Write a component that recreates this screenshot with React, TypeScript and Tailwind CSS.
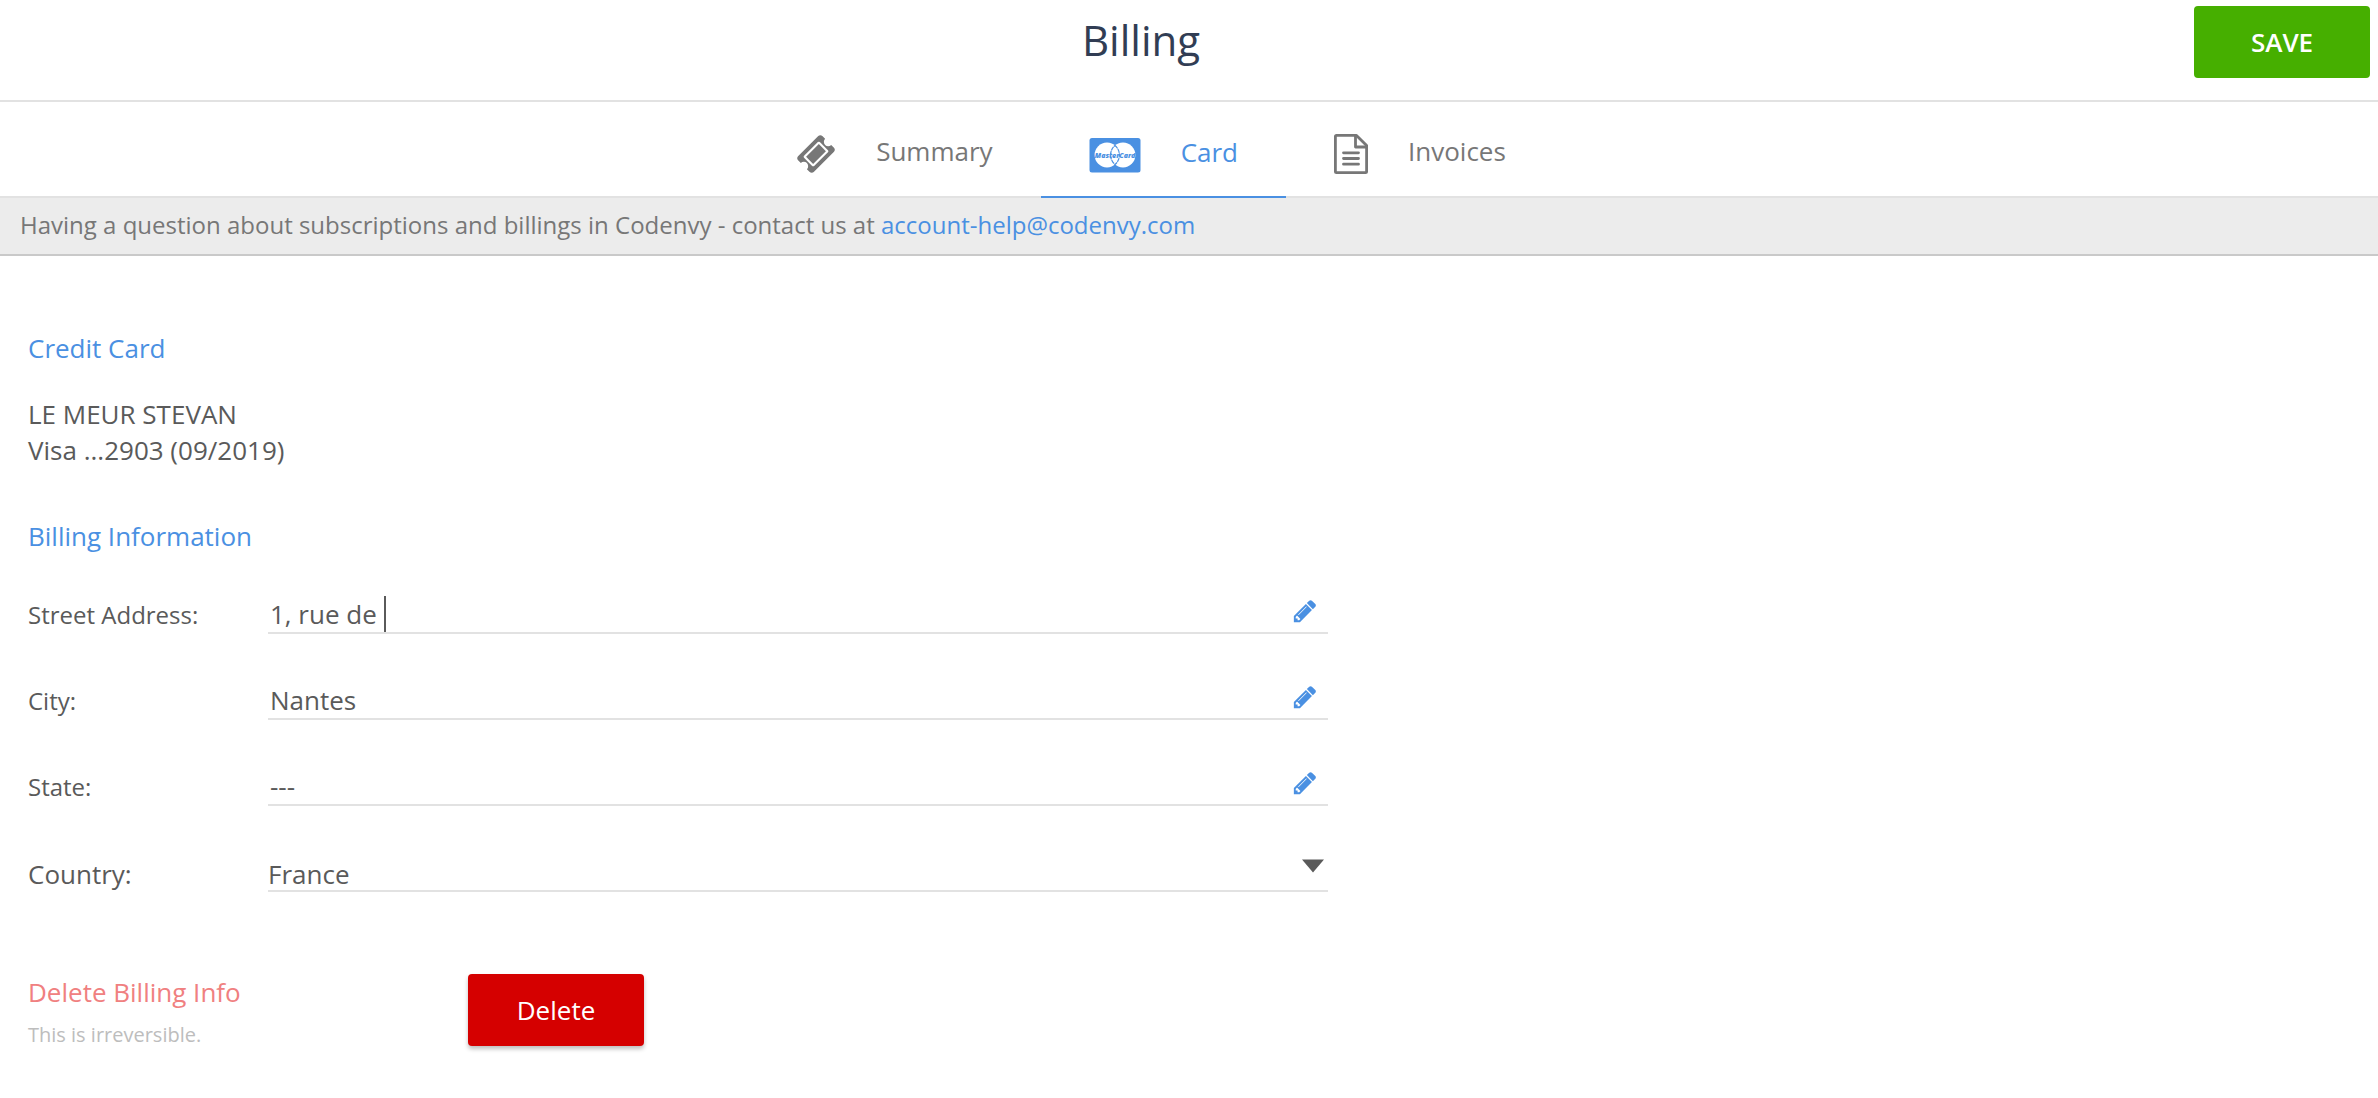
import { useEffect, useRef, useState } from 'react';
import type { ReactNode } from 'react';

function TicketIcon() {
  return (
    <svg className="size-10" viewBox="0 0 1792 1792" fill="currentColor" aria-hidden="true">
      <path d="M1024 452l316 316-572 572-316-316zm-211 979l618-618q19-19 19-45t-19-45l-362-362q-18-18-45-18t-45 18l-618 618q-19 19-19 45t19 45l362 362q18 18 45 18t45-18zm889-637l-907 908q-37 37-90.500 37t-90.500-37l-126-126q56-56 56-136t-56-136-136-56-136 56l-125-126q-37-37-37-90.500t37-90.500l907-906q37-37 90.500-37t90.500 37l125 125q-56 56-56 136t56 136 136 56 136-56l126 125q37 37 37 90.500t-37 90.500z" />
    </svg>
  );
}

function MasterCardIcon() {
  return (
    <svg className="h-9 w-13" viewBox="0 0 52 36" aria-hidden="true">
      <rect x="0.500" y="1" width="51" height="34.500" rx="2.500" fill="#4a90e2" />
      <circle cx="18" cy="18" r="12.400" fill="#fff" />
      <circle cx="34" cy="18" r="12.400" fill="#fff" />
      <path
        d="M26 8.500A12.400 12.400 0 0 1 26 27.500A12.400 12.400 0 0 1 26 8.500Z"
        fill="none"
        stroke="#4a90e2"
        strokeWidth="1.200"
        strokeDasharray="4 0.600"
      />
      <text
        x="26"
        y="20.500"
        textAnchor="middle"
        fontSize="7"
        fontWeight="800"
        fontStyle="italic"
        fill="#4a90e2"
      >
        MasterCard
      </text>
    </svg>
  );
}

function InvoiceIcon() {
  return (
    <svg className="h-10 w-[34px]" viewBox="0 0 34 40" fill="none" stroke="currentColor" strokeWidth="2.800" aria-hidden="true">
      <path d="M2.500 1.400H22.500L32.600 11.500V37.500Q32.600 38.600 31.500 38.600H2.500Q1.400 38.600 1.400 37.500V2.500Q1.400 1.400 2.500 1.400Z" strokeLinejoin="round" />
      <path d="M21.500 1.400V13H32.600" strokeLinejoin="round" />
      <path d="M9.500 18.800H24.500M9.500 24.500H24.500M9.500 30.200H24.500" strokeLinecap="round" />
    </svg>
  );
}

function PencilIcon() {
  return (
    <svg className="size-[26px]" viewBox="0 0 1792 1792" fill="currentColor" aria-hidden="true">
      <path d="M491 1536l91-91-235-235-91 91v107h128v128h107zm523-928q0-22-22-22-10 0-17 7l-542 542q-7 7-7 17 0 22 22 22 10 0 17-7l542-542q7-7 7-17zm-54-192l416 416-832 832h-416v-416zm683 96q0 53-37 90l-166 166-416-416 166-165q36-38 90-38 53 0 91 38l235 234q37 39 37 91z" />
    </svg>
  );
}

function Tab({ label, icon, active = false }: { label: string; icon: ReactNode; active?: boolean }) {
  return (
    <button
      type="button"
      role="tab"
      aria-selected={active}
      className={
        active
          ? 'flex h-24 items-center gap-10 border-b-2 border-[#4a90e2] px-12 pt-3 text-[#4a90e2]'
          : 'flex h-24 items-center gap-10 border-b-2 border-[#e2e2e2] px-12 pt-2.5 text-[#777777]'
      }
    >
      {icon}
      <span className="pb-1.5">{label}</span>
    </button>
  );
}

function Field({ id, label, value, focused = false }: { id: string; label: string; value: string; focused?: boolean }) {
  const [text, setText] = useState(value);
  const ref = useRef<HTMLInputElement>(null);
  useEffect(() => {
    if (focused && ref.current) {
      ref.current.focus();
      ref.current.setSelectionRange(value.length, value.length);
    }
  }, [focused, value]);
  return (
    <div className="flex h-18 items-end">
      <label htmlFor={id} className="w-60 shrink-0 pb-px text-2xl leading-9">
        {label}
      </label>
      <div className="flex flex-1 items-center border-b-2 border-[#e2e2e2] pr-2.5">
        <div className="flex flex-1 items-center">
          <input
            id={id}
            ref={ref}
            value={text}
            onChange={(e) => setText(e.target.value)}
            className="field-sizing-content h-9 min-w-0 bg-transparent pl-0.5 caret-transparent outline-none"
          />
          {focused && <span className="h-9 w-0.5 bg-[#5a5a5a]" />}
        </div>
        <button type="button" aria-label={'Edit ' + label} className="pb-1.5 text-[#4a90e2]">
          <PencilIcon />
        </button>
      </div>
    </div>
  );
}

export default function App() {
  return (
    <div className="min-h-screen bg-white font-['Open_Sans',sans-serif] text-[26px] leading-9 text-[#5a5a5a]">
      <header className="flex items-start border-b-2 border-[#e2e2e2] pt-1.5 pr-2 pb-[22px] pl-[88px]">
        <h1 className="flex-1 pt-1.5 text-center text-[42px] leading-[56px] text-[#313d54]">Billing</h1>
        <button type="button" className="h-18 w-44 rounded-sm bg-[#46af00] font-semibold text-white">
          SAVE
        </button>
      </header>

      <nav role="tablist" className="flex">
        <div className="flex-1 border-b-2 border-[#e2e2e2]" />
        <Tab label="Summary" icon={<TicketIcon />} />
        <Tab label="Card" icon={<MasterCardIcon />} active />
        <Tab label="Invoices" icon={<InvoiceIcon />} />
        <div className="flex-1 border-b-2 border-[#e2e2e2] pr-[76px]" />
      </nav>

      <p className="border-b-2 border-[#c9c9c9] bg-[#ececec] px-5 pt-[9px] pb-[11px] text-2xl leading-9 text-[#777777]">
        Having a question about subscriptions and billings in Codenvy - contact us at{' '}
        <a href="mailto:account-help@codenvy.com" className="text-[#4a90e2]">
          account-help@codenvy.com
        </a>
      </p>

      <main className="px-7 pt-[74px]">
        <section>
          <h2 className="text-[#4a90e2]">Credit Card</h2>
          <p className="pt-[30px]">
            LE MEUR STEVAN
            <br />
            Visa ...2903 (09/2019)
          </p>
        </section>

        <form className="max-w-[1300px] pt-[50px]">
          <h2 className="text-[#4a90e2]">Billing Information</h2>
          <div className="flex flex-col gap-3.5 pt-2">
            <Field id="street" label="Street Address:" value="1, rue de " focused />
            <Field id="city" label="City:" value="Nantes" />
            <Field id="state" label="State:" value="---" />
            <div className="flex h-18 items-end">
              <label htmlFor="country" className="w-60 shrink-0">
                Country:
              </label>
              <div className="grid flex-1 items-center border-b-2 border-[#e2e2e2]">
                <select id="country" defaultValue="France" className="col-start-1 row-start-1 h-9 w-full appearance-none bg-transparent pt-0.5 outline-none">
                  <option>France</option>
                </select>
                <svg className="pointer-events-none col-start-1 row-start-1 mr-1 mb-3 h-3.5 w-[22px] justify-self-end" viewBox="0 0 22 14" fill="#5a5a5a" aria-hidden="true">
                  <path d="M0 0.500H22L11 13.500Z" />
                </svg>
              </div>
            </div>
          </div>
        </form>

        <section className="flex items-start pt-[82px]">
          <div className="w-[440px]">
            <h2 className="text-[#f08080]">Delete Billing Info</h2>
            <p className="pt-[7px] text-xl leading-9 text-[#bdbdbd]">This is irreversible.</p>
          </div>
          <button type="button" className="h-18 w-44 rounded-sm bg-[#d50000] text-white shadow-[0_3px_4px_rgba(0,0,0,0.25)]">
            Delete
          </button>
        </section>
      </main>
    </div>
  );
}
